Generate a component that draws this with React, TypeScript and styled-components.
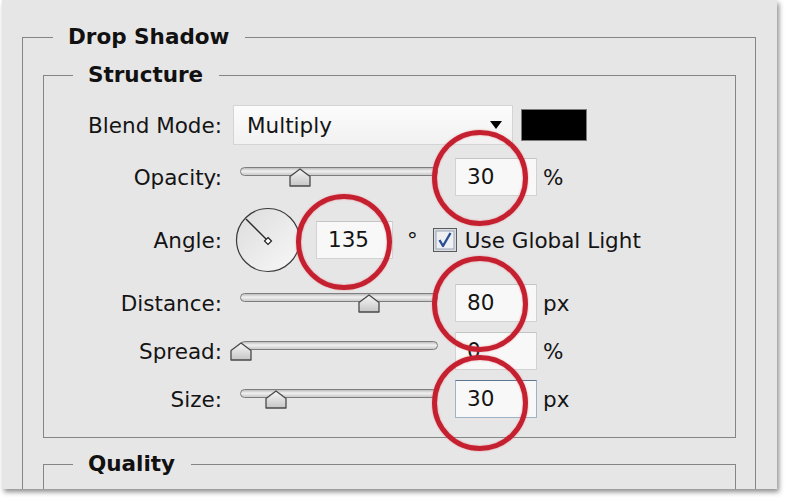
import React from "react";
import styled, { createGlobalStyle } from "styled-components";

const GlobalStyle = createGlobalStyle`
  html, body {
    margin: 0;
    padding: 0;
    background: #ffffff;
  }
  body {
    font-family: "DejaVu Sans", Verdana, sans-serif;
    color: #141414;
  }
`;

const Stage = styled.div`
  position: relative;
  width: 790px;
  height: 504px;
  overflow: hidden;
  background: #ffffff;
`;

const Panel = styled.div`
  margin-left: 2px;
  width: 775px;
  height: 489px;
  box-sizing: border-box;
  padding: 25px 21px 0 20px;
  background: #e7e6e7;
  box-shadow: 2px 3px 5px rgba(0, 0, 0, 0.45);
  overflow: hidden;
`;

const Group = styled.fieldset<{ $pad: string; $mt?: number }>`
  margin: ${(p) => p.$mt ?? 0}px 0 0 0;
  padding: ${(p) => p.$pad};
  border: 1px solid #858585;
  min-width: 0;
`;

const Legend = styled.legend<{ $ml: number }>`
  margin-left: ${(p) => p.$ml}px;
  padding: 0 16px 0 15px;
  font-size: 21.5px;
  font-weight: bold;
  line-height: 24px;
  color: #111111;
`;

const Row = styled.div<{ $h: number; $mt: number }>`
  display: flex;
  align-items: center;
  height: ${(p) => p.$h}px;
  margin-top: ${(p) => p.$mt}px;
`;

const Label = styled.div`
  flex: none;
  width: 178px;
  text-align: right;
  font-size: 21.5px;
`;

const Dropdown = styled.div`
  display: flex;
  align-items: center;
  justify-content: space-between;
  box-sizing: border-box;
  width: 280px;
  height: 40px;
  margin-left: 11px;
  padding: 0 10px 0 13px;
  background: linear-gradient(#fcfcfc, #f1f1f1);
  border: 1px solid #d4d4d4;
  font-size: 21.5px;
`;

const Arrow = styled.span`
  width: 0;
  height: 0;
  border-left: 6px solid transparent;
  border-right: 6px solid transparent;
  border-top: 8px solid #000000;
`;

const Swatch = styled.div`
  width: 66px;
  height: 32px;
  margin-left: 8px;
  box-sizing: border-box;
  background: #000000;
  border: 1px solid #7b7b7b;
`;

const Slider = styled.div`
  position: relative;
  flex: none;
  width: 198px;
  height: 40px;
  margin-left: 18px;
`;

const Track = styled.div`
  margin-top: 10px;
  height: 9px;
  box-sizing: border-box;
  border: 1px solid #7e7e7e;
  border-radius: 5px;
  background: linear-gradient(#bdbdbd, #f1f1f1 45%, #c9c9c9);
`;

const Thumb = styled.svg`
  position: absolute;
  top: 11px;
`;

const NumberBox = styled.div<{ $w: number; $ml: number; $focus?: boolean }>`
  flex: none;
  box-sizing: border-box;
  width: ${(p) => p.$w}px;
  height: 38px;
  margin-left: ${(p) => p.$ml}px;
  padding-left: 11px;
  line-height: 36px;
  font-size: 21.5px;
  background: #f8f8f8;
  border: 1px solid ${(p) => (p.$focus ? "#9fb3c8" : "#d2d2d2")};
  border-top-color: ${(p) => (p.$focus ? "#5d7691" : "#c4c4c4")};
`;

const Unit = styled.span<{ $ml: number }>`
  margin-left: ${(p) => p.$ml}px;
  font-size: 21.5px;
`;

const Dial = styled.svg`
  flex: none;
  margin-left: 13px;
`;

const CheckBox = styled.svg`
  flex: none;
  margin-left: 15px;
`;

const CheckText = styled.span`
  margin-left: 8px;
  font-size: 21.5px;
`;

const Mark = styled.div<{ $x: number; $y: number }>`
  position: absolute;
  left: ${(p) => p.$x - 48}px;
  top: ${(p) => p.$y - 48}px;
  width: 96px;
  height: 96px;
  box-sizing: border-box;
  border: 5px solid #c4202f;
  border-radius: 50%;
  box-shadow: 0 0 2px rgba(230, 110, 120, 0.7), inset 0 0 2px rgba(230, 110, 120, 0.7);
`;

const SliderField: React.FC<{ pos: number }> = ({ pos }) => (
  <Slider>
    <Track />
    <Thumb width="22" height="19" viewBox="0 0 22 19" style={{ left: Math.round(pos * 197) - 10 }}>
      <defs>
        <linearGradient id="thumbFill" x1="0" y1="0" x2="0" y2="1">
          <stop offset="0" stopColor="#f6f6f6" />
          <stop offset="1" stopColor="#c6c6c6" />
        </linearGradient>
      </defs>
      <path d="M11 1 L21 8.5 L21 18 L1 18 L1 8.5 Z" fill="url(#thumbFill)" stroke="#4a4a4a" strokeWidth="1.3" strokeLinejoin="round" />
    </Thumb>
  </Slider>
);

const App: React.FC = () => {
  return (
    <Stage>
      <GlobalStyle />
      <Panel>
        <Group $pad="14px 19px 0 20px" style={{ height: 600 }}>
          <Legend $ml={10}>Drop Shadow</Legend>
          <Group $pad="18px 0 18px 0">
            <Legend $ml={29}>Structure</Legend>

            <Row $h={40} $mt={0}>
              <Label>Blend Mode:</Label>
              <Dropdown>
                <span>Multiply</span>
                <Arrow />
              </Dropdown>
              <Swatch />
            </Row>

            <Row $h={40} $mt={12}>
              <Label>Opacity:</Label>
              <SliderField pos={0.3} />
              <NumberBox $w={82} $ml={17}>30</NumberBox>
              <Unit $ml={6}>%</Unit>
            </Row>

            <Row $h={66} $mt={10}>
              <Label>Angle:</Label>
              <Dial width="66" height="66" viewBox="0 0 66 66">
                <defs>
                  <linearGradient id="dialFill" x1="0" y1="0" x2="1" y2="1">
                    <stop offset="0" stopColor="#dcdcdc" />
                    <stop offset="1" stopColor="#f8f8f8" />
                  </linearGradient>
                </defs>
                <circle cx="33" cy="33" r="31.5" fill="url(#dialFill)" stroke="#3a3a3a" strokeWidth="1.2" />
                <line x1="33" y1="34" x2="11" y2="12" stroke="#2a2a2a" strokeWidth="1.4" />
                <path d="M33 30.5 L36.5 34 L33 37.5 L29.5 34 Z" fill="#ffffff" stroke="#222222" strokeWidth="1.2" />
              </Dial>
              <NumberBox $w={77} $ml={15}>135</NumberBox>
              <Unit $ml={14}>°</Unit>
              <CheckBox width="24" height="24" viewBox="0 0 24 24">
                <rect x="0.5" y="0.5" width="23" height="23" fill="#d9dde3" stroke="#5a5a5a" />
                <rect x="3" y="3" width="18" height="18" fill="#eef0f4" stroke="#9aa4b2" />
                <path d="M6.5 12 L10 18 L17.5 5" fill="none" stroke="#2b4f93" strokeWidth="2.4" strokeLinejoin="round" />
              </CheckBox>
              <CheckText>Use Global Light</CheckText>
            </Row>

            <Row $h={40} $mt={10}>
              <Label>Distance:</Label>
              <SliderField pos={0.65} />
              <NumberBox $w={82} $ml={17}>80</NumberBox>
              <Unit $ml={6}>px</Unit>
            </Row>

            <Row $h={40} $mt={8}>
              <Label>Spread:</Label>
              <SliderField pos={0} />
              <NumberBox $w={82} $ml={17}>0</NumberBox>
              <Unit $ml={6}>%</Unit>
            </Row>

            <Row $h={40} $mt={8}>
              <Label>Size:</Label>
              <SliderField pos={0.178} />
              <NumberBox $w={82} $ml={17} $focus>30</NumberBox>
              <Unit $ml={6}>px</Unit>
            </Row>
          </Group>

          <Group $pad="0" $mt={14} style={{ height: 80 }}>
            <Legend $ml={29}>Quality</Legend>
          </Group>
        </Group>
      </Panel>

      <Mark $x={480} $y={178} />
      <Mark $x={344} $y={242} />
      <Mark $x={480} $y={304} />
      <Mark $x={480} $y={403} />
    </Stage>
  );
};

export default App;
